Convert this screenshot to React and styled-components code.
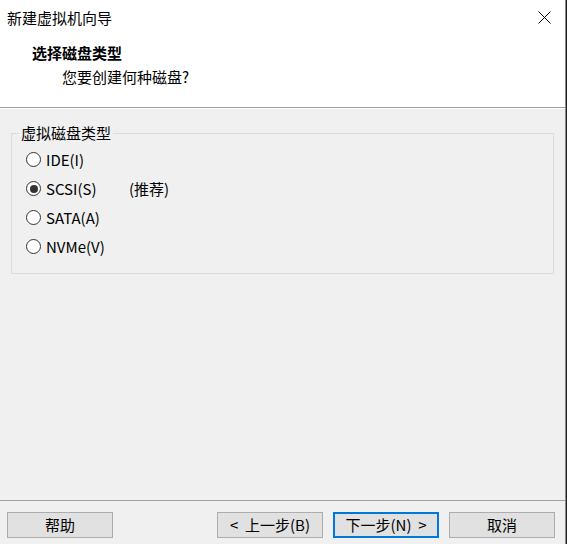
import React from "react";
import styled, { createGlobalStyle } from "styled-components";

const Global = createGlobalStyle`
  html, body { margin: 0; padding: 0; background: #1f1f1f; }
  body { font-family: "Noto Sans CJK SC", "Noto Sans", sans-serif; font-size: 15px; color: #000; }
  #root { width: 567px; height: 544px; }
`;

const Window = styled.div`
  width: 565px;
  height: 544px;
  border-right: 1px solid #8a8a8a;
  background: #f0f0f0;
  display: flex;
  flex-direction: column;
  overflow: hidden;
`;

const Top = styled.div`
  background: #fff;
  height: 108px;
  box-sizing: border-box;
  border-bottom: 1px solid #a0a0a0;
  box-shadow: 0 1px 0 #ffffff;
  display: flex;
  flex-direction: column;
`;

const TitleBar = styled.div`
  height: 34px;
  display: flex;
  align-items: center;
  justify-content: space-between;
  padding: 0 14px 0 7px;
`;

const TitleText = styled.div`
  font-size: 15px;
  line-height: 20px;
  margin-top: 1px;
`;

const Header = styled.div`
  padding: 9px 0 0 32px;
  display: flex;
  flex-direction: column;
  gap: 4px;
`;

const HeaderTitle = styled.div`
  font-weight: bold;
  line-height: 20px;
`;

const HeaderSub = styled.div`
  line-height: 20px;
  padding-left: 30px;
`;

const Body = styled.div`
  flex: 1;
  padding: 15px 11px 0 11px;
`;

const Group = styled.fieldset`
  margin: 0;
  padding: 2px 0 11px 14px;
  border: 1px solid #dcdcdc;
  min-width: 0;
  height: 151px;
  box-sizing: border-box;
`;

const Legend = styled.legend`
  padding: 0 2px;
  margin-left: -7px;
  line-height: 20px;
`;

const RadioRow = styled.label`
  display: flex;
  align-items: center;
  height: 29px;
  gap: 5px;
`;

const RadioCircle = styled.span`
  width: 15px;
  height: 15px;
  box-sizing: border-box;
  border-radius: 50%;
  border: 1px solid #333;
  background: #fff;
  display: flex;
  align-items: center;
  justify-content: center;
  flex-shrink: 0;
  &::after {
    content: "";
    width: 8px;
    height: 8px;
    border-radius: 50%;
    background: #333;
    display: ${(p) => (p.$checked ? "block" : "none")};
  }
`;

const RadioText = styled.span`
  line-height: 20px;
  min-width: ${(p) => p.$minWidth || 0}px;
`;

const Note = styled.span`
  line-height: 20px;
`;

const Footer = styled.div`
  height: 44px;
  box-sizing: border-box;
  border-top: 1px solid #a0a0a0;
  padding: 11px 10px 0 7px;
  display: flex;
  align-items: flex-start;
  gap: 10px;
`;

const Spacer = styled.div`
  flex: 1;
`;

const Button = styled.button`
  width: 106px;
  height: 26px;
  box-sizing: border-box;
  background: #e1e1e1;
  border: ${(p) => (p.$default ? "2px solid #0078d7" : "1px solid #adadad")};
  font-family: inherit;
  font-size: 15px;
  color: #000;
  padding: 0;
  line-height: 20px;
  display: flex;
  align-items: center;
  justify-content: center;
  white-space: pre;
`;

const options = [
  { label: "IDE(I)" },
  { label: "SCSI(S)", checked: true, note: "(推荐)" },
  { label: "SATA(A)" },
  { label: "NVMe(V)" },
];

export default function App() {
  return (
    <>
      <Global />
      <Window>
        <Top>
          <TitleBar>
            <TitleText>新建虚拟机向导</TitleText>
            <svg width="13" height="13" viewBox="0 0 13 13">
              <path d="M0.5 0.5 L12.5 12.5 M12.5 0.5 L0.5 12.5" stroke="#000" strokeWidth="1" fill="none" />
            </svg>
          </TitleBar>
          <Header>
            <HeaderTitle>选择磁盘类型</HeaderTitle>
            <HeaderSub>您要创建何种磁盘?</HeaderSub>
          </Header>
        </Top>
        <Body>
          <Group>
            <Legend>虚拟磁盘类型</Legend>
            {options.map((o) => (
              <RadioRow key={o.label}>
                <RadioCircle $checked={o.checked} />
                <RadioText $minWidth={o.note ? 78 : 0}>{o.label}</RadioText>
                {o.note && <Note>{o.note}</Note>}
              </RadioRow>
            ))}
          </Group>
        </Body>
        <Footer>
          <Button>帮助</Button>
          <Spacer />
          <Button>{"<  上一步(B)"}</Button>
          <Button $default>{"下一步(N)  >"}</Button>
          <Button>取消</Button>
        </Footer>
      </Window>
    </>
  );
}
